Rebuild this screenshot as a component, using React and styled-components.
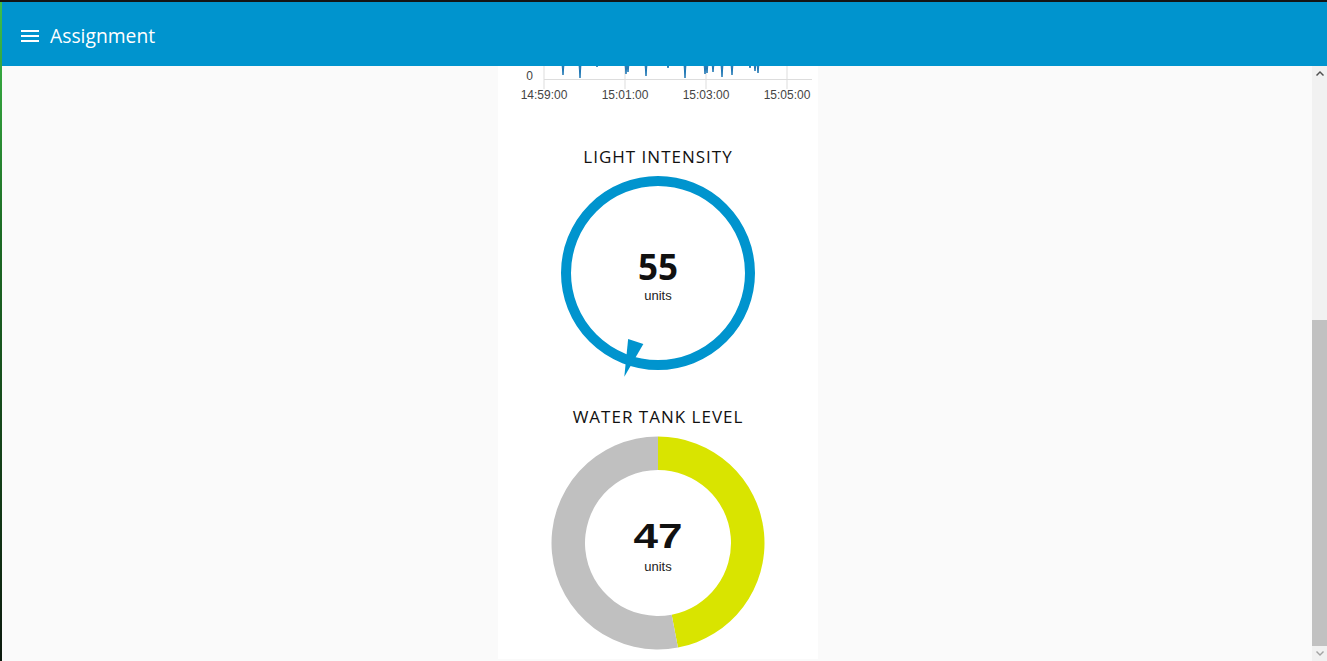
import React from 'react';
import styled, { createGlobalStyle } from 'styled-components';

const GlobalStyle = createGlobalStyle`
  html,
  body {
    margin: 0;
    padding: 0;
    height: 100%;
    overflow: hidden;
    background: #fafafa;
  }

  #root {
    height: 100%;
  }
`;

const Frame = styled.div`
  display: flex;
  flex-direction: column;
  width: 100vw;
  height: 100vh;
`;

const TopStrip = styled.div`
  height: 2px;
  flex-shrink: 0;
  background: #141414;
`;

const Shell = styled.div`
  flex: 1;
  display: flex;
  min-height: 0;
`;

const LeftEdge = styled.div`
  width: 2px;
  flex-shrink: 0;
  background: linear-gradient(#3fbf4a 0%, #1c6b24 35%, #0c1a0e 100%);
`;

const Main = styled.div`
  flex: 1;
  display: flex;
  flex-direction: column;
  min-width: 0;
`;

const Header = styled.header`
  height: 64px;
  flex-shrink: 0;
  display: flex;
  align-items: center;
  gap: 8px;
  padding: 3px 0 0 16px;
  box-sizing: border-box;
  background: #0094ce;
  color: #ffffff;
`;

const MenuIcon = styled.svg`
  width: 24px;
  height: 24px;
  fill: #ffffff;
  flex-shrink: 0;
`;

const AppTitle = styled.h1`
  margin: 0;
  font-family: 'Open Sans', 'Noto Sans', sans-serif;
  font-size: 19.3px;
  font-weight: 400;
`;

const Body = styled.div`
  flex: 1;
  display: flex;
  min-height: 0;
`;

const Content = styled.main`
  flex: 1;
  display: flex;
  justify-content: center;
  padding-left: 2px;
  overflow: hidden;
`;

const Card = styled.section`
  width: 320px;
  display: flex;
  flex-direction: column;
  align-items: center;
  background: #ffffff;
  margin-bottom: 2px;
`;

const Widget = styled.div`
  display: flex;
  flex-direction: column;
  align-items: center;
  margin-top: ${(p) => p.$top}px;
`;

const WidgetTitle = styled.h3`
  margin: 0;
  height: 20px;
  line-height: 20px;
  font-family: 'Open Sans', 'Noto Sans', sans-serif;
  font-size: 17px;
  font-weight: 400;
  letter-spacing: 1px;
  color: #111111;
`;

const GaugeSvg = styled.svg`
  display: block;
  margin-top: ${(p) => p.$top}px;
`;

const ChartText = styled.text`
  font-family: 'Liberation Sans', Arial, sans-serif;
  font-size: 12px;
  fill: #444444;
`;

const BigValue = styled.text`
  font-family: ${(p) => p.$font};
  font-size: 35px;
  font-weight: 700;
  fill: #111111;
`;

const Units = styled.text`
  font-family: 'Liberation Sans', Arial, sans-serif;
  font-size: 13px;
  fill: #222222;
`;

const Scrollbar = styled.div`
  width: 15px;
  flex-shrink: 0;
  display: flex;
  flex-direction: column;
  background: #f1f1f1;
`;

const ScrollArrow = styled.div`
  height: 15px;
  flex-shrink: 0;
  display: flex;
  align-items: center;
  justify-content: center;
  svg {
    width: 8px;
    height: 5px;
    fill: ${(p) => (p.$disabled ? '#a3a3a3' : '#505050')};
  }
`;

const ScrollSpacer = styled.div`
  height: ${(p) => p.$h}px;
  flex-shrink: 0;
`;

const ScrollThumb = styled.div`
  flex: 1;
  background: #c1c1c1;
`;

const gridX = [46, 127, 208, 289];
const timeLabels = ['14:59:00', '15:01:00', '15:03:00', '15:05:00'];
const spikes = [
  [65, 9],
  [82, 12],
  [99, 1],
  [128, 8],
  [130, 6],
  [148, 10],
  [170, 2],
  [187, 12],
  [207, 8],
  [209, 7],
  [215, 6],
  [224, 11],
  [234, 9],
  [252, 2],
  [257, 5],
  [260, 7],
];

const ChartTail = () => (
  <svg width="320" height="38" viewBox="0 0 320 38">
    {gridX.map((x) => (
      <line key={x} x1={x} y1="0" x2={x} y2="23" stroke="#dddddd" strokeWidth="1" />
    ))}
    <line x1="46" y1="13.5" x2="314" y2="13.5" stroke="#dddddd" strokeWidth="1" />
    {spikes.map(([x, y]) => (
      <path
        key={x}
        d={`M${x - 1} -2 L${x} ${y} L${x + 1} -2`}
        fill="#1f77b4"
        stroke="#1f77b4"
        strokeWidth="1"
      />
    ))}
    <ChartText x="35" y="14" textAnchor="end">
      0
    </ChartText>
    {timeLabels.map((t, i) => (
      <ChartText key={t} x={gridX[i]} y="33" textAnchor="middle">
        {t}
      </ChartText>
    ))}
  </svg>
);

const polar = (cx, cy, r, deg) => {
  const a = (deg * Math.PI) / 180;
  return [cx + r * Math.sin(a), cy - r * Math.cos(a)];
};

const CompassGauge = ({ value, angle }) => {
  const cx = 160;
  const cy = 103;
  const [bx, by] = polar(cx, cy, 72, angle);
  const [tx, ty] = polar(cx, cy, 109, angle);
  const a = (angle * Math.PI) / 180;
  const px = Math.cos(a) * 8;
  const py = Math.sin(a) * 8;
  const pts = `${tx},${ty} ${bx + px},${by + py} ${bx - px},${by - py}`;
  return (
    <GaugeSvg $top={3} width="320" height="210" viewBox="0 0 320 210">
      <circle cx={cx} cy={cy} r="92" fill="none" stroke="#0094ce" strokeWidth="10" />
      <polygon points={pts} fill="#0094ce" />
      <BigValue $font="'Open Sans', 'Noto Sans', sans-serif" x={cx} y="110" textAnchor="middle">
        {value}
      </BigValue>
      <Units x={cx} y="129.5" textAnchor="middle">
        units
      </Units>
    </GaugeSvg>
  );
};

const arcPath = (cx, cy, R, r, from, to) => {
  const large = to - from > 180 ? 1 : 0;
  const [x1, y1] = polar(cx, cy, R, from);
  const [x2, y2] = polar(cx, cy, R, to);
  const [x3, y3] = polar(cx, cy, r, to);
  const [x4, y4] = polar(cx, cy, r, from);
  return `M${x1} ${y1} A${R} ${R} 0 ${large} 1 ${x2} ${y2} L${x3} ${y3} A${r} ${r} 0 ${large} 0 ${x4} ${y4} Z`;
};

const DonutGauge = ({ value, max }) => {
  const cx = 160;
  const cy = 113;
  const end = (value / max) * 360;
  return (
    <GaugeSvg $top={3} width="320" height="225" viewBox="0 0 320 225">
      <path d={arcPath(cx, cy, 106.5, 73, 0, end)} fill="#d9e400" />
      <path d={arcPath(cx, cy, 106.5, 73, end, 360)} fill="#c0c0c0" />
      <BigValue
        $font="'Liberation Sans', Arial, sans-serif"
        x={cx}
        y="118"
        textAnchor="middle"
        textLength="49"
        lengthAdjust="spacingAndGlyphs"
      >
        {value}
      </BigValue>
      <Units x={cx} y="141" textAnchor="middle">
        units
      </Units>
    </GaugeSvg>
  );
};

const App = () => (
  <>
    <GlobalStyle />
    <Frame>
      <TopStrip />
      <Shell>
        <LeftEdge />
        <Main>
          <Header>
            <MenuIcon viewBox="0 0 24 24">
              <path d="M3 18h18v-2H3v2zm0-5h18v-2H3v2zm0-7v2h18V6H3z" />
            </MenuIcon>
            <AppTitle>Assignment</AppTitle>
          </Header>
          <Body>
            <Content>
              <Card>
                <ChartTail />
                <Widget $top={43}>
                  <WidgetTitle>LIGHT INTENSITY</WidgetTitle>
                  <CompassGauge value={55} angle={198} />
                </Widget>
                <Widget $top={27}>
                  <WidgetTitle>WATER TANK LEVEL</WidgetTitle>
                  <DonutGauge value={47} max={100} />
                </Widget>
              </Card>
            </Content>
            <Scrollbar>
              <ScrollArrow>
                <svg viewBox="0 0 8 5">
                  <path d="M4 0 L8 4 L7 5 L4 2 L1 5 L0 4 Z" />
                </svg>
              </ScrollArrow>
              <ScrollSpacer $h={239} />
              <ScrollThumb />
              <ScrollArrow $disabled>
                <svg viewBox="0 0 8 5">
                  <path d="M4 5 L8 1 L7 0 L4 3 L1 0 L0 1 Z" />
                </svg>
              </ScrollArrow>
            </Scrollbar>
          </Body>
        </Main>
      </Shell>
    </Frame>
  </>
);

export default App;
